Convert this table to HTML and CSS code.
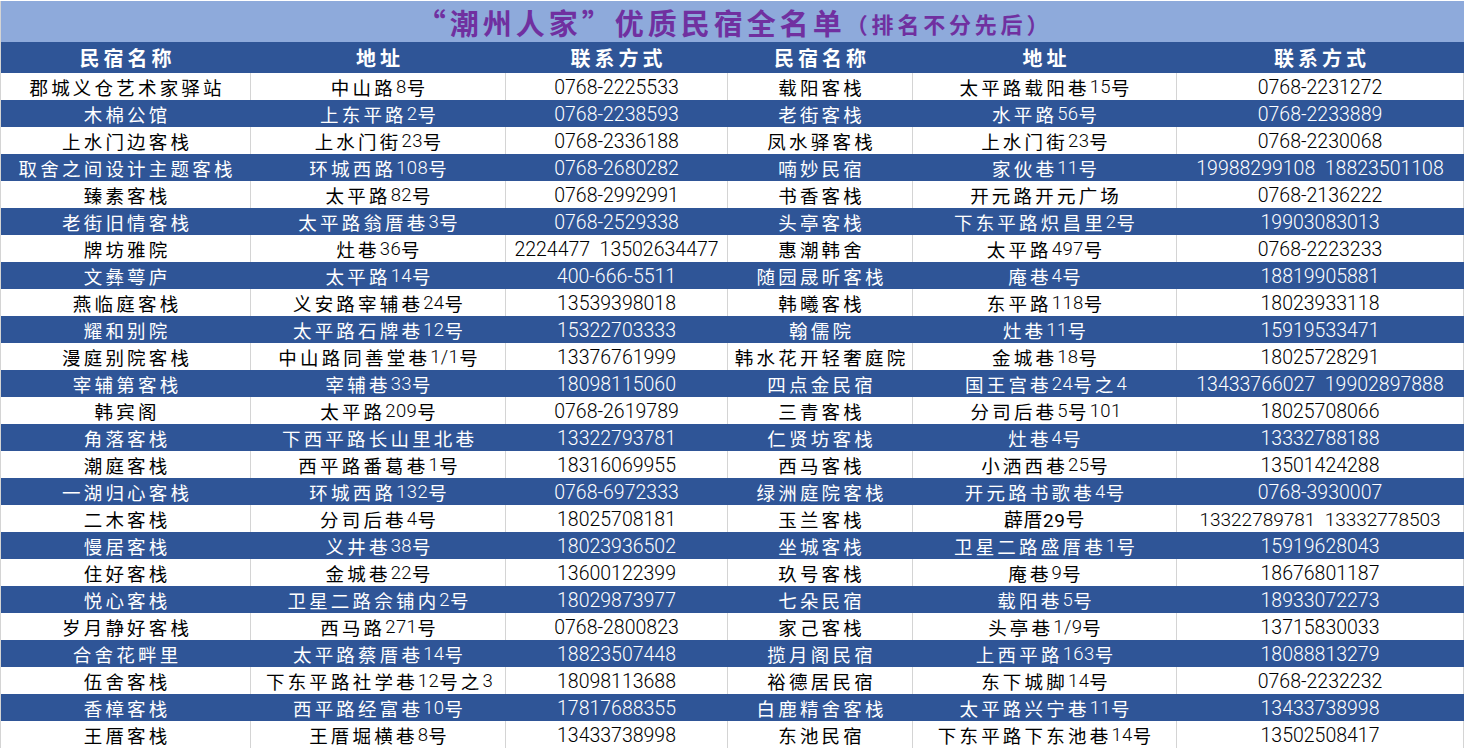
FILE: index.html
```html
<!DOCTYPE html>
<html lang="zh-CN">
<head>
<meta charset="utf-8">
<title>“潮州人家”优质民宿全名单</title>
<link rel="stylesheet" href="styles.css">
</head>
<body>
<div class="sheet">
  <div class="title"><span class="main">“潮州人家”优质民宿全名单</span><span class="sub">（排名不分先后）</span></div>
  <div class="row head">
    <div class="c">民宿名称</div><div class="c">地址</div><div class="c">联系方式</div>
    <div class="c">民宿名称</div><div class="c">地址</div><div class="c">联系方式</div>
  </div>
  <div class="row">
    <div class="c t">郡城义仓艺术家驿站</div><div class="c t">中山路<span class="n">8</span>号</div><div class="c p">0768-2225533</div>
    <div class="c t">载阳客栈</div><div class="c t">太平路载阳巷<span class="n">15</span>号</div><div class="c p">0768-2231272</div>
  </div>
  <div class="row b">
    <div class="c t">木棉公馆</div><div class="c t">上东平路<span class="n">2</span>号</div><div class="c p">0768-2238593</div>
    <div class="c t">老街客栈</div><div class="c t">水平路<span class="n">56</span>号</div><div class="c p">0768-2233889</div>
  </div>
  <div class="row">
    <div class="c t">上水门边客栈</div><div class="c t">上水门街<span class="n">23</span>号</div><div class="c p">0768-2336188</div>
    <div class="c t">凤水驿客栈</div><div class="c t">上水门街<span class="n">23</span>号</div><div class="c p">0768-2230068</div>
  </div>
  <div class="row b">
    <div class="c t">取舍之间设计主题客栈</div><div class="c t">环城西路<span class="n">108</span>号</div><div class="c p">0768-2680282</div>
    <div class="c t">喃妙民宿</div><div class="c t">家伙巷<span class="n">11</span>号</div><div class="c p">19988299108  18823501108</div>
  </div>
  <div class="row">
    <div class="c t">臻素客栈</div><div class="c t">太平路<span class="n">82</span>号</div><div class="c p">0768-2992991</div>
    <div class="c t">书香客栈</div><div class="c t">开元路开元广场</div><div class="c p">0768-2136222</div>
  </div>
  <div class="row b">
    <div class="c t">老街旧情客栈</div><div class="c t">太平路翁厝巷<span class="n">3</span>号</div><div class="c p">0768-2529338</div>
    <div class="c t">头亭客栈</div><div class="c t">下东平路炽昌里<span class="n">2</span>号</div><div class="c p">19903083013</div>
  </div>
  <div class="row">
    <div class="c t">牌坊雅院</div><div class="c t">灶巷<span class="n">36</span>号</div><div class="c p">2224477  13502634477</div>
    <div class="c t">惠潮韩舍</div><div class="c t">太平路<span class="n">497</span>号</div><div class="c p">0768-2223233</div>
  </div>
  <div class="row b">
    <div class="c t">文彝萼庐</div><div class="c t">太平路<span class="n">14</span>号</div><div class="c p">400-666-5511</div>
    <div class="c t">随园晟昕客栈</div><div class="c t">庵巷<span class="n">4</span>号</div><div class="c p">18819905881</div>
  </div>
  <div class="row">
    <div class="c t">燕临庭客栈</div><div class="c t">义安路宰辅巷<span class="n">24</span>号</div><div class="c p">13539398018</div>
    <div class="c t">韩曦客栈</div><div class="c t">东平路<span class="n">118</span>号</div><div class="c p">18023933118</div>
  </div>
  <div class="row b">
    <div class="c t">耀和别院</div><div class="c t">太平路石牌巷<span class="n">12</span>号</div><div class="c p">15322703333</div>
    <div class="c t">翰儒院</div><div class="c t">灶巷<span class="n">11</span>号</div><div class="c p">15919533471</div>
  </div>
  <div class="row">
    <div class="c t">漫庭别院客栈</div><div class="c t">中山路同善堂巷<span class="n">1/1</span>号</div><div class="c p">13376761999</div>
    <div class="c t">韩水花开轻奢庭院</div><div class="c t">金城巷<span class="n">18</span>号</div><div class="c p">18025728291</div>
  </div>
  <div class="row b">
    <div class="c t">宰辅第客栈</div><div class="c t">宰辅巷<span class="n">33</span>号</div><div class="c p">18098115060</div>
    <div class="c t">四点金民宿</div><div class="c t">国王宫巷<span class="n">24</span>号之<span class="n">4</span></div><div class="c p">13433766027  19902897888</div>
  </div>
  <div class="row">
    <div class="c t">韩宾阁</div><div class="c t">太平路<span class="n">209</span>号</div><div class="c p">0768-2619789</div>
    <div class="c t">三青客栈</div><div class="c t">分司后巷<span class="n">5</span>号<span class="n">101</span></div><div class="c p">18025708066</div>
  </div>
  <div class="row b">
    <div class="c t">角落客栈</div><div class="c t">下西平路长山里北巷</div><div class="c p">13322793781</div>
    <div class="c t">仁贤坊客栈</div><div class="c t">灶巷<span class="n">4</span>号</div><div class="c p">13332788188</div>
  </div>
  <div class="row">
    <div class="c t">潮庭客栈</div><div class="c t">西平路番葛巷<span class="n">1</span>号</div><div class="c p">18316069955</div>
    <div class="c t">西马客栈</div><div class="c t">小洒西巷<span class="n">25</span>号</div><div class="c p">13501424288</div>
  </div>
  <div class="row b">
    <div class="c t">一湖归心客栈</div><div class="c t">环城西路<span class="n">132</span>号</div><div class="c p">0768-6972333</div>
    <div class="c t">绿洲庭院客栈</div><div class="c t">开元路书歌巷<span class="n">4</span>号</div><div class="c p">0768-3930007</div>
  </div>
  <div class="row">
    <div class="c t">二木客栈</div><div class="c t">分司后巷<span class="n">4</span>号</div><div class="c p">18025708181</div>
    <div class="c t">玉兰客栈</div><div class="c alt">薜厝29号</div><div class="c p sm">13322789781  13332778503</div>
  </div>
  <div class="row b">
    <div class="c t">慢居客栈</div><div class="c t">义井巷<span class="n">38</span>号</div><div class="c p">18023936502</div>
    <div class="c t">坐城客栈</div><div class="c t">卫星二路盛厝巷<span class="n">1</span>号</div><div class="c p">15919628043</div>
  </div>
  <div class="row">
    <div class="c t">住好客栈</div><div class="c t">金城巷<span class="n">22</span>号</div><div class="c p">13600122399</div>
    <div class="c t">玖号客栈</div><div class="c t">庵巷<span class="n">9</span>号</div><div class="c p">18676801187</div>
  </div>
  <div class="row b">
    <div class="c t">悦心客栈</div><div class="c t">卫星二路佘铺内<span class="n">2</span>号</div><div class="c p">18029873977</div>
    <div class="c t">七朵民宿</div><div class="c t">载阳巷<span class="n">5</span>号</div><div class="c p">18933072273</div>
  </div>
  <div class="row">
    <div class="c t">岁月静好客栈</div><div class="c t">西马路<span class="n">271</span>号</div><div class="c p">0768-2800823</div>
    <div class="c t">家己客栈</div><div class="c t">头亭巷<span class="n">1/9</span>号</div><div class="c p">13715830033</div>
  </div>
  <div class="row b">
    <div class="c t">合舍花畔里</div><div class="c t">太平路蔡厝巷<span class="n">14</span>号</div><div class="c p">18823507448</div>
    <div class="c t">揽月阁民宿</div><div class="c t">上西平路<span class="n">163</span>号</div><div class="c p">18088813279</div>
  </div>
  <div class="row">
    <div class="c t">伍舍客栈</div><div class="c t">下东平路社学巷<span class="n">12</span>号之<span class="n">3</span></div><div class="c p">18098113688</div>
    <div class="c t">裕德居民宿</div><div class="c t">东下城脚<span class="n">14</span>号</div><div class="c p">0768-2232232</div>
  </div>
  <div class="row b">
    <div class="c t">香樟客栈</div><div class="c t">西平路经富巷<span class="n">10</span>号</div><div class="c p">17817688355</div>
    <div class="c t">白鹿精舍客栈</div><div class="c t">太平路兴宁巷<span class="n">11</span>号</div><div class="c p">13433738998</div>
  </div>
  <div class="row">
    <div class="c t">王厝客栈</div><div class="c t">王厝堀横巷<span class="n">8</span>号</div><div class="c p">13433738998</div>
    <div class="c t">东池民宿</div><div class="c t">下东平路下东池巷<span class="n">14</span>号</div><div class="c p">13502508417</div>
  </div>
</div>
</body>
</html>
```
FILE: styles.css
```css
* { box-sizing: border-box; }
html, body { margin: 0; padding: 0; background: #ffffff; }
body { font-family: Roboto, "Noto Sans CJK SC", sans-serif; color: #000; }

.sheet {
  width: 1464px;
  margin: 1px 0 0 0;
  border-left: 1px solid #d4d4d4;
}

.title {
  height: 41px;
  background: #8eaadb;
  color: #7030a0;
  display: flex;
  align-items: center;
  justify-content: center;
  font-family: "Noto Sans CJK SC", sans-serif;
  font-weight: 700;
  white-space: nowrap;
  padding-left: 4px;
}
.title .main { font-size: 29px; letter-spacing: 4px; }
.title .sub { font-size: 22px; letter-spacing: 3.8px; padding-top: 3px; }

.row {
  display: grid;
  grid-template-columns: 250px 255px 222px 185px 264px 287px;
  height: 27px;
  background: #ffffff;
}
.row.head {
  height: 31px;
  background: #2f5597;
  color: #ffffff;
}
.row.b { background: #2f5597; color: #ffffff; }

.c {
  display: flex;
  align-items: center;
  justify-content: center;
  white-space: pre;
  border-right: 1px solid #d4d4d4;
  overflow: hidden;
}
.row.b .c, .row.head .c { border-right-color: #2f5597; }

.row.head .c {
  font-family: "Noto Sans CJK SC", sans-serif;
  font-weight: 700;
  font-size: 20px;
  letter-spacing: 4px;
  padding-left: 4px;
}

.t {
  font-size: 18.5px;
  letter-spacing: 3.2px;
  padding-left: 3.2px;
}
.t .n { letter-spacing: 0.4px; font-weight: 300; }

.p { font-size: 19.5px; font-weight: 300; padding-top: 2px; }
.p.sm { font-size: 19px; }

.alt {
  font-size: 19px;
  letter-spacing: 0.5px;
}
```
